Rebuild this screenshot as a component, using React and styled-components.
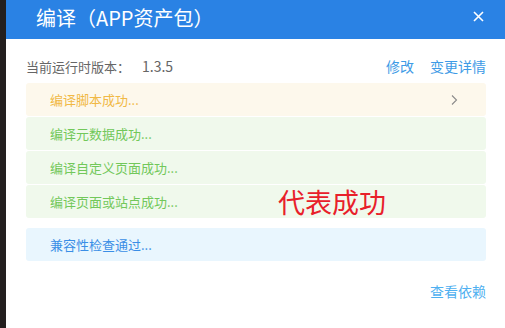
import React from 'react';
import styled, { createGlobalStyle } from 'styled-components';

const GlobalStyle = createGlobalStyle`
  html, body {
    margin: 0;
    padding: 0;
    background: #231f1f;
  }
  body {
    font-family: "Noto Sans CJK SC", "Noto Sans", sans-serif;
  }
`;

const tones = {
  warning: { bg: '#fdf8ec', fg: '#f1b945' },
  success: { bg: '#f0f9ec', fg: '#72c85a' },
  info: { bg: '#e9f6fe', fg: '#3a8ee6' },
};

const steps = [
  { text: '编译脚本成功...', tone: 'warning', arrow: true },
  { text: '编译元数据成功...', tone: 'success' },
  { text: '编译自定义页面成功...', tone: 'success' },
  { text: '编译页面或站点成功...', tone: 'success' },
];

const Page = styled.div`
  display: flex;
  width: 505px;
  height: 328px;
  overflow: hidden;
`;

const Edge = styled.div`
  width: 6px;
  flex: none;
  background: #231f1f;
`;

const Dialog = styled.div`
  flex: 1;
  display: flex;
  flex-direction: column;
  background: #fff;
`;

const Header = styled.header`
  height: 39px;
  flex: none;
  display: flex;
  align-items: center;
  justify-content: space-between;
  padding: 0 20px 0 30px;
  background: #2a82e4;
  color: #fff;
`;

const Title = styled.h1`
  margin: 0;
  font-size: 20px;
  font-weight: 400;
  line-height: 1;
  position: relative;
  top: -2px;
`;

const CloseButton = styled.button`
  border: 0;
  padding: 0;
  background: none;
  display: flex;
  position: relative;
  top: -3px;
  left: -1px;
  cursor: pointer;
`;

const Body = styled.div`
  padding: 18px 19px 0 20px;
  position: relative;
`;

const VersionBar = styled.div`
  display: flex;
  align-items: center;
  justify-content: space-between;
  height: 18px;
  font-size: 13px;
  color: #666;
`;

const Version = styled.span`
  margin-left: 12px;
  font-size: 14px;
`;

const Links = styled.div`
  display: flex;
  gap: 16px;
`;

const Link = styled.a`
  color: ${({ light }) => (light ? '#4fb0f0' : '#3d9be6')};
  font-size: 14px;
  text-decoration: none;
  cursor: pointer;
`;

const StepList = styled.div`
  display: flex;
  flex-direction: column;
  gap: 1px;
  margin-top: 8px;
`;

const Step = styled.div`
  height: 33px;
  display: flex;
  align-items: center;
  justify-content: space-between;
  padding: 0 28px 0 24px;
  border-radius: 3px;
  font-size: 13px;
  background: ${({ tone }) => tones[tone].bg};
  color: ${({ tone }) => tones[tone].fg};
  margin-top: ${({ gapTop }) => gapTop || 0}px;
`;

const Note = styled.span`
  position: absolute;
  left: 272px;
  top: 149px;
  font-size: 27px;
  line-height: 1;
  color: #e8202a;
`;

const Footer = styled.div`
  display: flex;
  justify-content: flex-end;
  margin-top: 21px;
  height: 18px;
  align-items: center;
`;

const Chevron = () => (
  <svg width="8" height="12" viewBox="0 0 8 12">
    <path d="M2 1.5 L6.5 6 L2 10.5" fill="none" stroke="#8a8a8a" strokeWidth="1.1" />
  </svg>
);

const CloseIcon = () => (
  <svg width="11" height="11" viewBox="0 0 11 11">
    <path d="M1 1 L10 10 M10 1 L1 10" stroke="#fff" strokeWidth="1.6" />
  </svg>
);

const App = () => (
  <>
    <GlobalStyle />
    <Page>
      <Edge />
      <Dialog>
        <Header>
          <Title>编译（APP资产包）</Title>
          <CloseButton aria-label="关闭">
            <CloseIcon />
          </CloseButton>
        </Header>
        <Body>
          <VersionBar>
            <span>
              当前运行时版本：
              <Version>1.3.5</Version>
            </span>
            <Links>
              <Link>修改</Link>
              <Link>变更详情</Link>
            </Links>
          </VersionBar>
          <StepList>
            {steps.map((s) => (
              <Step key={s.text} tone={s.tone}>
                <span>{s.text}</span>
                {s.arrow ? <Chevron /> : null}
              </Step>
            ))}
          </StepList>
          <Step tone="info" gapTop={10}>
            <span>兼容性检查通过...</span>
          </Step>
          <Footer>
            <Link light>查看依赖</Link>
          </Footer>
          <Note>代表成功</Note>
        </Body>
      </Dialog>
    </Page>
  </>
);

export default App;
